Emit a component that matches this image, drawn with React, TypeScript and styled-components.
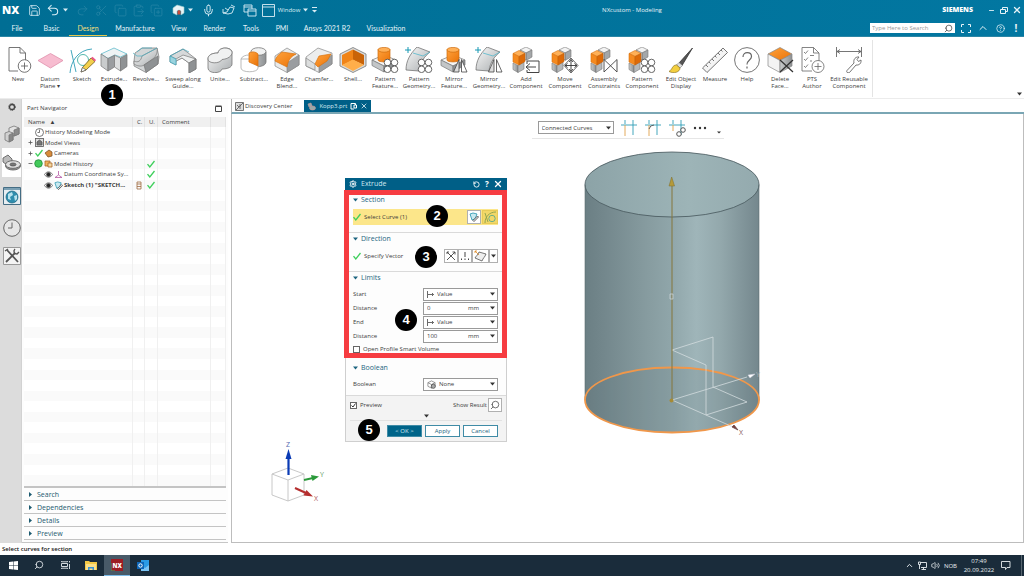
import React from 'react';
import styled, { createGlobalStyle, css } from 'styled-components';
import { Save, Undo2, Redo2, Scissors, Copy, ClipboardPaste, CopyPlus, Mic, Search, Settings, RotateCcw, X, ChevronUp, CircleHelp, Minus, Volume2 } from 'lucide-react';

const teal = '#00719a';
const deep = '#005f87';
const ink = '#3c3c3c';

const Global = createGlobalStyle`
  *, *::before, *::after { box-sizing: border-box; }
  body { margin: 0; font-family: "Open Sans", "Noto Sans", sans-serif; font-size: 6px; line-height: 8px; color: ${ink}; background: #fff; }
  button, input, select { font: inherit; color: inherit; margin: 0; padding: 0; border: 0; background: none; border-radius: 0; }
  svg { display: block; flex: none; }
  h1, h2, p { margin: 0; font: inherit; }
`;

const Page = styled.div`
  position: relative;
  display: flex;
  flex-direction: column;
  min-height: 100vh;
`;

/* ---------- header ---------- */
const Header = styled.header`
  background: linear-gradient(90deg, #006e94, #0277a1);
  color: #e6f3f8;
  border-bottom: 1px solid #2b86a5;
`;
const TitleBar = styled.div`
  position: relative;
  display: flex;
  align-items: center;
  height: 20px;
`;
const Brand = styled.strong`
  width: 26px;
  padding-left: 2px;
  font: 800 11px/20px "Open Sans", sans-serif;
  color: #fff;
`;
const QuickButton = styled.button<{ $w: number; $dim?: boolean }>`
  display: flex;
  align-items: center;
  justify-content: center;
  gap: 3px;
  width: ${(p) => p.$w}px;
  height: 18px;
  color: #d9edf5;
  opacity: ${(p) => (p.$dim ? 0.16 : 1)};
`;
const DocTitle = styled.h1`
  position: absolute;
  left: 50%;
  width: 240px;
  text-align: center;
`;
const WindowControls = styled.div`
  display: flex;
  align-items: center;
  gap: 3px;
  margin-left: auto;
  padding-right: 2px;
`;
const Maker = styled.strong`
  margin-right: 10px;
  font: 800 7px/10px "Open Sans", sans-serif;
  color: #fff;
`;
const MenuRow = styled.nav`
  display: flex;
  align-items: center;
  height: 16px;
`;
const MenuTab = styled.button<{ $w: number; $on?: boolean }>`
  width: ${(p) => p.$w}px;
  height: 16px;
  font-family: Lato, "Open Sans", sans-serif;
  font-size: 7px;
  line-height: 16px;
  border-bottom: 1px solid transparent;
  ${(p) => p.$on && css`color: #f3df7c; border-color: #e5c84c;`}
`;
const MenuTools = styled.div`
  display: flex;
  align-items: center;
  gap: 6px;
  margin-left: auto;
  padding-right: 3px;
`;
const SearchBox = styled.div`
  display: flex;
  align-items: center;
  width: 85px;
  height: 10px;
  padding: 0 2px;
  background: #fff;
  color: #444;
  input { flex: 1; min-width: 0; height: 10px; outline: none; }
  input::placeholder { color: #999; opacity: 1; }
`;
const PlainButton = styled.button`
  display: flex;
  align-items: center;
  justify-content: center;
  min-width: 10px;
  height: 10px;
`;
const Alert = styled.b`
  font-size: 10px;
  line-height: 10px;
`;

/* ---------- ribbon ---------- */
const Ribbon = styled.div`
  display: flex;
  height: 62px;
  padding: 3px 0 1px 2px;
  border-bottom: 1px solid #ececec;
`;
const ToolButton = styled.button<{ $w: number }>`
  display: flex;
  flex-direction: column;
  align-items: center;
  width: ${(p) => p.$w}px;
  padding-top: 7px;
  line-height: 7px;
  white-space: nowrap;
  span { margin-top: 3px; white-space: pre-line; }
`;
const RibbonEnd = styled.div`
  flex: 1;
  display: flex;
  align-items: flex-end;
  justify-content: flex-end;
  margin-left: 2px;
  padding: 0 2px 1px 0;
  border-left: 1px solid #e4e4e4;
`;

/* ---------- work area ---------- */
const Main = styled.main`
  flex: 1;
  display: flex;
  min-height: 0;
`;
const Rail = styled.div`
  width: 22px;
  padding-left: 2px;
  background: #dcdcdc;
  border-right: 1px solid #d2d2d2;
  > :first-child { margin-bottom: 5px; }
`;
const RailButton = styled.button<{ $h: number; $on?: boolean }>`
  display: flex;
  align-items: center;
  justify-content: center;
  width: 100%;
  height: ${(p) => p.$h}px;
  background: ${(p) => (p.$on ? '#fff' : 'none')};
`;
const Navigator = styled.section`
  display: flex;
  flex-direction: column;
  width: 206px;
  padding: 0 2px 2px 2px;
  border-bottom: 1px solid #c6c6c6;
  background: #fdfdfd;
`;
const NavHead = styled.div`
  display: flex;
  align-items: center;
  justify-content: space-between;
  height: 18px;
  padding: 0 3px;
`;
const TreeWrap = styled.div`
  flex: 1;
  display: flex;
  border-bottom: 2px solid #c4c4c4;
`;
const Tree = styled.table`
  width: 100%;
  table-layout: fixed;
  border-collapse: collapse;
  th, td { height: 10px; padding: 0; border-right: 1px solid #f0f0f0; line-height: 8px; overflow: hidden; white-space: nowrap; }
  th { font-weight: 400; text-align: left; padding-left: 4px; background: #f0f0f0; border-color: #e2e2e2; }
  tbody tr:nth-child(odd) { background: #fff; }
  tbody tr:nth-child(even) { background: #fafafa; }
`;
const NodeCell = styled.div<{ $depth: number; $bold?: boolean }>`
  display: flex;
  align-items: center;
  gap: 1px;
  height: 8px;
  padding-left: ${(p) => p.$depth}px;
  font-weight: ${(p) => (p.$bold ? 700 : 400)};
`;
const Center = styled.div`
  display: flex;
  align-items: center;
  justify-content: center;
  height: 8px;
`;
const Fold = styled.button`
  display: flex;
  align-items: center;
  gap: 5px;
  height: 13px;
  padding: 1px 5px 0;
  font-size: 7px;
  color: #1c5a70;
  border-bottom: 1px solid #c4c4c4;
`;

const Work = styled.section`
  flex: 1;
  display: flex;
  flex-direction: column;
  margin-left: 3px;
  min-width: 0;
`;
const FileTabs = styled.div`
  display: flex;
  height: 15px;
  padding-top: 1px;
  border-left: 1px solid #b5b5b5;
  border-bottom: 2px solid #7aa6b4;
`;
const FileTab = styled.button<{ $on?: boolean }>`
  display: flex;
  align-items: center;
  gap: ${(p) => (p.$on ? 3 : 1)}px;
  padding: 0 ${(p) => (p.$on ? 3 : 12)}px 0 3px;
  ${(p) => p.$on && css`background: ${deep}; color: #d9ecf3;`}
`;
const Canvas = styled.div`
  position: relative;
  flex: 1;
  background: #fff;
  border: solid #bdbdbd;
  border-width: 0 1px 1px 1px;
`;
const SelectionBar = styled.div`
  display: flex;
  align-items: center;
  gap: 7px;
  width: 192px;
  height: 25px;
  margin: 0 auto;
  padding: 3px 0 0 6px;
  border-bottom: 1px solid #e6e6e6;
`;
const Model = styled.svg`
  position: absolute;
  left: 347px;
  top: 32px;
`;
const Triad = styled.svg`
  position: absolute;
  left: 36px;
  bottom: 35px;
`;

/* ---------- dialog ---------- */
const Dialog = styled.form`
  position: absolute;
  left: 113px;
  top: 64px;
  width: 162px;
  background: #fdfdfd;
  border: solid #cfcfcf;
  border-width: 0 1px 1px 1px;
`;
const DialogTitle = styled.div`
  display: flex;
  align-items: center;
  gap: 4px;
  height: 12px;
  margin: 0 -1px;
  padding: 0 4px;
  background: ${deep};
  color: #cfe6ef;
  h2 { flex: 1; font-size: 7px; }
  b { font-size: 8px; color: #fff; }
`;
const Group = styled.section<{ $top?: number; $bottom: number }>`
  padding: ${(p) => p.$top ?? 0}px 8px ${(p) => p.$bottom}px 7px;
  border-bottom: 1px solid #dadada;
`;
const GroupHead = styled.button`
  display: flex;
  align-items: center;
  gap: 3px;
  height: 12px;
  margin-bottom: 3px;
  font-size: 7px;
  color: #1c6580;
`;
const Line = styled.div<{ $h: number; $hot?: boolean }>`
  display: flex;
  align-items: center;
  height: ${(p) => p.$h}px;
  gap: 3px;
  ${(p) => p.$hot && css`background: #fce68a;`}
  > label, > p { flex: 1; }
`;
const Strip = styled.div<{ $gap?: number }>`
  display: flex;
  gap: ${(p) => p.$gap ?? 0}px;
`;
const Box = styled.div<{ $w: number }>`
  display: flex;
  align-items: center;
  gap: 3px;
  width: ${(p) => p.$w}px;
  height: 13px;
  padding: 0 2px 0 3px;
  background: #fff;
  border: 1px solid #9a9a9a;
  input, select { flex: 1; min-width: 0; width: 10px; height: 11px; appearance: none; outline: none; }
  input + span { margin-right: 8px; }
`;
const Tool = styled.button<{ $w?: number; $hot?: boolean }>`
  display: flex;
  align-items: center;
  justify-content: center;
  width: ${(p) => p.$w ?? 14}px;
  height: 14px;
  background: ${(p) => (p.$hot ? '#f2d768' : '#fff')};
  border: 1px solid ${(p) => (p.$hot ? '#e8cb58' : '#b0b0b0')};
`;
const Tick = styled.input`
  appearance: none;
  width: 7px;
  height: 7px;
  border: 1px solid #666;
  background: #fff;
`;
const TickBox = styled.span`
  position: relative;
  display: flex;
  svg { position: absolute; left: 1px; top: 1px; pointer-events: none; }
`;
const Footer = styled.div`
  padding: 2px 4px 4px 4px;
  background: #f3f3f3;
`;
const ShowResult = styled.div`
  display: flex;
  align-items: center;
  gap: 1px;
`;
const More = styled.button`
  display: flex;
  justify-content: center;
  align-items: center;
  width: 100%;
  height: 9px;
  margin-bottom: 4px;
  border-bottom: 1px solid #e2e2e2;
`;
const Actions = styled.div`
  display: flex;
  justify-content: flex-end;
  gap: 3px;
  padding-right: 4px;
`;
const Action = styled.button<{ $main?: boolean }>`
  width: 35px;
  height: 12px;
  border: 1px solid #3f8ba6;
  background: ${(p) => (p.$main ? '#006489' : '#fff')};
  color: ${(p) => (p.$main ? '#d7ecf4' : '#1c6580')};
`;
const Frame = styled.div`
  position: absolute;
  left: -2px;
  right: -1px;
  top: 12px;
  height: 168px;
  border: 5px solid #f63c41;
  pointer-events: none;
`;
const Badge = styled.span<{ $x: number; $y: number }>`
  position: absolute;
  left: ${(p) => p.$x}px;
  top: ${(p) => p.$y}px;
  width: 22px;
  height: 22px;
  border-radius: 50%;
  background: #000;
  color: #fff;
  text-align: center;
  font: 700 13px/22px "Liberation Sans", Arial, sans-serif;
  z-index: 2;
`;

/* ---------- bottom ---------- */
const Status = styled.div`
  height: 12px;
  padding-left: 2px;
  line-height: 12px;
  font-weight: 600;
  color: #111;
`;
const Taskbar = styled.footer`
  display: flex;
  align-items: center;
  height: 21px;
  background: #1a2c3b;
  color: #e8edf0;
`;
const TaskButton = styled.button<{ $on?: boolean }>`
  display: flex;
  align-items: center;
  justify-content: center;
  width: 26px;
  height: 21px;
  border-bottom: 1px solid ${(p) => (p.$on ? '#7cbbe8' : 'transparent')};
  background: ${(p) => (p.$on ? '#485a68' : 'none')};
`;
const Tray = styled.div`
  display: flex;
  align-items: center;
  gap: 4px;
  margin-left: auto;
  height: 100%;
  padding-right: 2px;
  time { width: 36px; text-align: center; line-height: 9px; }
`;
const Peek = styled.i`
  height: 100%;
  margin-left: 6px;
  border-left: 1px solid #57656f;
`;

/* ---------- small glyphs ---------- */
const Caret = ({ c = '#333' }: { c?: string }) => (
  <svg width="5" height="4" viewBox="0 0 5 4" fill={c}><path d="M0 .5h5L2.5 3.5z" /></svg>
);
const Check = ({ s = 8 }: { s?: number }) => (
  <svg width={s} height={s} viewBox="0 0 8 8" fill="none" stroke="#3fcf5c" strokeWidth="1.3"><path d="M.5 4.2 2.8 7 7.5 1" /></svg>
);

/* ---------- ribbon drawings ---------- */
const g = '#666';
const HiddenSvg = styled.svg`
  position: absolute;
`;
const Defs = () => (
  <HiddenSvg width="0" height="0" aria-hidden>
    <defs>
      <linearGradient id="gr" x1="0" y1="0" x2="1" y2="1"><stop offset="0" stopColor="#fafafa" /><stop offset="1" stopColor="#a9adaf" /></linearGradient>
      <linearGradient id="dk" x1="0" y1="0" x2="1" y2="0"><stop offset="0" stopColor="#c9cccd" /><stop offset="1" stopColor="#8d9092" /></linearGradient>
      <linearGradient id="or" x1="0" y1="0" x2="1" y2="1"><stop offset="0" stopColor="#ffa23c" /><stop offset="1" stopColor="#ea7308" /></linearGradient>
    </defs>
  </HiddenSvg>
);
const Blocks = () => (
  <g strokeWidth=".6" stroke="#777">
    <path d="M1 16 6 18.500V25.500L1 22.500z" fill="url(#dk)" />
    <path d="M6 18.500 12 15V22L6 25.500z" fill="#b5b8ba" />
    <path d="M8 3 14 0 20 3 14 6z" fill="#f3f3f3" />
    <path d="M14 6 20 3V10L14 13.500z" fill="#a4a7a9" />
    <path d="M8 3 14 6V13L8 10z" fill="#d5d7d8" />
    <path d="M1 6.500 7 3.500 13 6.500 7 9.500z" fill="#ffb057" stroke="#d9720f" />
    <path d="M1 6.500 7 9.500V18L1 15z" fill="#f58a1f" stroke="#d9720f" />
    <path d="M7 9.500 13 6.500V14.500L7 18z" fill="#dd6a08" stroke="#c5620a" />
  </g>
);
const Rings = ({ x = 13, y = 12 }: { x?: number; y?: number }) => (
  <g fill="#fff" stroke="#444" strokeWidth=".8">
    <circle cx={x + 3.500} cy={y + 3.500} r="3.300" /><circle cx={x + 10.500} cy={y + 3.500} r="3.300" /><circle cx={x + 3.500} cy={y + 10.300} r="3.300" /><circle cx={x + 10.500} cy={y + 10.300} r="3.300" />
  </g>
);
const Mirror = () => (
  <g fill="#fff" stroke="#444" strokeWidth=".8"><path d="M19 12.500V25H13.500z" fill="#ddd" /><path d="M21.500 12.500V25H27z" /></g>
);
const Boss = () => (
  <g stroke="#777" strokeWidth=".7">
    <path d="M1 13 13 8 25 13 13 19z" fill="#f6f6f6" /><path d="M1 13 13 19V25L1 18.500z" fill="#c3c6c8" /><path d="M13 19 25 13V18L13 25z" fill="#8f9294" />
    <path d="M7 2.500V13C7 15.500 19 15.500 19 13V2.500z" fill="url(#or)" stroke="#cf6a0a" /><ellipse cx="13" cy="2.800" rx="6" ry="2.400" fill="#ffb057" stroke="#cf6a0a" />
  </g>
);
const Sheet = () => (
  <g><path d="M1 23C1 14 5 7 12 0L25 5C20 9 15 15 14 24z" fill="url(#gr)" stroke={g} strokeWidth=".7" /><path d="M8 6 18 9 25 5" fill="none" stroke="#56b8cb" strokeWidth=".8" /><path d="M3 0V6M0 3H6" stroke="#1798b4" /></g>
);
const Cube = ({ top }: { top: string }) => (
  <g stroke="#888" strokeWidth=".7"><path d="M2 7 14 .500 26 7 14 13.500z" fill={top} /><path d="M2 7 14 13.500V25.500L2 19z" fill="#f3f3f3" /><path d="M14 13.500 26 7V19L14 25.500z" fill="url(#dk)" /></g>
);

const drawings: Record<string, React.ReactNode> = {
  new: <g fill="#fff" stroke={g} strokeWidth=".9"><path d="M14 24H5V.500H16L21.500 6V20M16 .500V6H21.500" /><circle cx="20.500" cy="19" r="6.300" /><path d="M20.500 15.500V22.500M17 19H24" /></g>,
  datum: <path d="M2 13.500 14.500 6.500 27 13.500 14.500 21z" fill="#f7bcd0" stroke="#df8fab" strokeWidth=".8" />,
  sketch: <g fill="none" stroke="#2f9db5" strokeWidth=".9"><path d="M2 26C3 14 10 3 24 2M3 3 8 25" /><circle cx="15" cy="13" r="5.500" stroke="#3fb0a4" /><path d="M13 25 14.500 20.500 23 11 27 14.500 18 23z" fill="#f3cf4c" stroke="#735d20" strokeWidth=".8" /><path d="M13 25 14.500 20.500 18 23z" fill="#fff" stroke="#555" strokeWidth=".7" /><path d="M23 11 27 14.500 28 13 24.500 9.800z" fill="#e58" stroke="none" /></g>,
  extrude: <g stroke="#777" strokeWidth=".7"><path d="M1 7 14 1 27 7 20.500 10 15 8 8 11.500z" fill="#eef3f4" stroke="#4cb3c6" /><path d="M1 7 8 11.500V24L1 19z" fill="#c9cccd" /><path d="M8 11.500 14.500 8.300V20L8 24z" fill="#9a9da0" /><path d="M14.500 8.300 20.500 11V24L14.500 20z" fill="#dcdedf" /><path d="M20.500 11 27 7.500V19.500L20.500 24z" fill="#8f9294" /></g>,
  revolve: <g stroke="#777" strokeWidth=".7"><path d="M3 6 10 1 25 1 27 10 26 17 14 25.500 2 19V14z" fill="#d3d6d7" /><path d="M2 14C6 16 9 14 10 9L25 1C26 5 24 9 22 11L12 18C9 20 5 19 2 17z" fill="url(#gr)" /><path d="M12 18 26 9V17L14 25.500z" fill="#8f9294" /><path d="M1 6 5 9 10 9 25 1M5 5 10 1H20" fill="none" stroke="#4cb3c6" /></g>,
  sweep: <g stroke="#777" strokeWidth=".7"><path d="M1 9 14 2 27 12V22L20 26V16L13 11 7 14V18L1 15z" fill="#d6d9da" /><path d="M1 9 7 12 14 8 27 12 20 16 13 11 7 14" fill="#eef0f0" /><path d="M20 16 27 12V22L20 26z" fill="#8f9294" /><path d="M1 9 7 12V18L1 15z" fill="#9bd3de" stroke="#3ba4ba" /><path d="M1 9 14 2 20 5" fill="none" stroke="#3ba4ba" /></g>,
  unite: <g stroke="#777" strokeWidth=".8"><path d="M2 12V21C2 27 15 27 16 22C22 22 26 20 26 17V5C26 0 13-1 12 6C6 6 2 8 2 12z" fill="url(#gr)" /><path d="M2 12C2 17 14 17 16 12.500C22 12 26 9 26 5.500C26 0 13-1 12 6C6 6 2 8 2 12z" fill="#f0f1f1" /></g>,
  subtract: <g stroke="#777" strokeWidth=".8"><path d="M11 5V18C14 21 26 20 26 15V5z" fill="url(#dk)" /><ellipse cx="18.500" cy="4.500" rx="7.500" ry="3.800" fill="#f0f1f1" /><path d="M1 12V21C1 26 18 26 18 21V12z" fill="#fff" stroke="#aaa" /><path d="M9 6C12 4 16 5 18 7V19L9 15z" fill="url(#or)" stroke="#d9720f" /><path d="M1 12C2 9 6 8 9 8" fill="none" stroke="#aaa" /></g>,
  blend: <g stroke="#888" strokeWidth=".7"><path d="M2 9 14 1 26 8V18L14 25.500 2 19z" fill="#e9eaea" /><path d="M14 16 26 8V18L14 25.500z" fill="#9a9da0" /><path d="M2 14C3 10 6 7 9 5L23 7C17 10 15 14 14 20z" fill="url(#or)" stroke="#d9720f" /></g>,
  chamfer: <g stroke="#888" strokeWidth=".7"><path d="M1 10 13 1 27 6V17L14 25.500 1 19z" fill="#eceded" /><path d="M14 17 27 8V17L14 25.500z" fill="#9a9da0" /><path d="M1 11 10 17V23L1 19z" fill="#dcdede" /><path d="M10 17 14 9 26 7 22 14 13 20z" fill="url(#or)" stroke="#d9720f" /></g>,
  shell: <g stroke="#777" strokeWidth=".8"><path d="M14 .500 27 7V19L14 25.500 1 19V7z" fill="#d9dbdc" /><path d="M3 8 14 2.500V13L3 18.500z" fill="#f08418" stroke="none" /><path d="M14 2.500 25 8V18L14 13z" fill="#c96308" stroke="none" /><path d="M3 18 14 12.500 25 18 14 24z" fill="#ffae4a" stroke="none" /></g>,
  patternFeature: <><Boss /><Rings /></>,
  patternGeometry: <><Sheet /><Rings /></>,
  mirrorFeature: <><Boss /><Mirror /></>,
  mirrorGeometry: <><Sheet /><Mirror /></>,
  add: <><Blocks /><path d="M15 17V14H27V25.500H15V23M24 20H14M18 16.500 14 20 18 23.500" fill="none" stroke="#444" /></>,
  move: <><Blocks /><path d="M20 11 27 18.500 20 26 13 18.500z" fill="#fff" stroke="#444" strokeWidth=".8" /><path d="M20 12.500V24.500M14 18.500H26M18 15 20 12.500 22 15M18 22 20 24.500 22 22M16.500 16.500 14 18.500 16.500 20.500M23.500 16.500 26 18.500 23.500 20.500" fill="none" stroke="#333" strokeWidth=".9" /></>,
  constraints: <><Blocks /><path d="M14 12.500 27 25V12.500L14 25z" fill="#fff" stroke="#444" strokeWidth=".9" /></>,
  patternComponent: <><Blocks /><Rings /></>,
  display: <g><path d="M25.500 1 12 16 15 18.500z" fill="#555" stroke="#333" strokeWidth=".8" /><path d="M12 15.500 9.500 18 13 21 15.500 18.500z" fill="#ddd" stroke="#777" strokeWidth=".6" /><path d="M9.500 18C5 18 6 22 2 24.500C7 27 13 25 13 21z" fill="#f3cf3f" stroke="#8f7620" strokeWidth=".7" /></g>,
  measure: <g fill="#f4f4f4" stroke={g} strokeWidth=".9"><path d="M1.500 21 22 1 26.500 5.500 6 25.500z" /><path d="M5 18 7 20M8 15 9.500 16.500M11 12 13 14M14 9 15.500 10.500M17 6 19 8M20 3 21.500 4.500" /></g>,
  help: <g fill="none" stroke={g} strokeWidth=".9"><circle cx="14" cy="13" r="12.400" /><path d="M10 10C10 4 18.500 4.500 18.500 9.500C18.500 13 14 13 14 17.500M14 19.500V21.500" strokeWidth="1.200" /></g>,
  deleteFace: <g><Cube top="url(#or)" /><path d="M14 13 27 25M27 13 14 25" stroke="#333" strokeWidth="1.300" /></g>,
  pts: <g fill="#fff" stroke={g} strokeWidth=".8"><path d="M14 24H4V.500H15.500L21 6V15M15.500 .500V6H21" /><path d="M6 5 7.500 6.500 10 3.500M6 12 7.500 13.500 10 10.500M6 19 7.500 20.500 10 17.500M12 8.500H16M12 14H14" /><circle cx="20" cy="19.500" r="6" /><path d="M20 16V23M16.500 19.500H23.500" /></g>,
  reusable: <g fill="#fff" stroke={g} strokeWidth=".9"><path d="M1.500 0V10M26.500 0V10M2 4.500H26M5 2.500 2 4.500 5 6.500M23 2.500 26 4.500 23 6.500" /><path d="M12 23.500 19 16C18 12 21 9.500 24 10L22 12.500 23.500 14.500 26 13C26.500 16.500 24 18.500 21 18L14.500 25.500C12.500 26.500 11 25 12 23.500z" /></g>,
};

const tools: [string, string, number][] = [
  ['new', 'New', 32], ['datum', 'Datum\nPlane ▾', 32], ['sketch', 'Sketch', 32], ['extrude', 'Extrude...', 32],
  ['revolve', 'Revolve...', 32], ['sweep', 'Sweep along\nGuide...', 42], ['unite', 'Unite...', 32], ['subtract', 'Subtract...', 36],
  ['blend', 'Edge\nBlend...', 30], ['chamfer', 'Chamfer...', 34], ['shell', 'Shell...', 34], ['patternFeature', 'Pattern\nFeature...', 30],
  ['patternGeometry', 'Pattern\nGeometry...', 38], ['mirrorFeature', 'Mirror\nFeature...', 32], ['mirrorGeometry', 'Mirror\nGeometry...', 38],
  ['add', 'Add\nComponent', 36], ['move', 'Move\nComponent', 42], ['constraints', 'Assembly\nConstraints', 36],
  ['patternComponent', 'Pattern\nComponent', 40], ['display', 'Edit Object\nDisplay', 38], ['measure', 'Measure', 30],
  ['help', 'Help', 34], ['deleteFace', 'Delete\nFace...', 32], ['pts', 'PTS\nAuthor', 32], ['reusable', 'Edit Reusable\nComponent', 42],
];
const menu: [string, number][] = [
  ['File', 34], ['Basic', 35], ['Design', 38], ['Manufacture', 56], ['View', 32], ['Render', 39], ['Tools', 34], ['PMI', 28], ['Ansys 2021 R2', 62], ['Visualization', 56],
];

/* ---------- tree drawings ---------- */
const Small = ({ children, w = 9 }: { children: React.ReactNode; w?: number }) => (
  <svg width={w} height="9" viewBox={`0 0 ${w} 9`} fill="none" stroke="#555" strokeWidth=".8">{children}</svg>
);
const Plus = () => <Small w={6}><path d="M.500 4.500H4.500M2.500 2.500V6.500" /></Small>;
const Eye = () => <Small><path d="M.500 4.500C2.500 1 6.500 1 8.500 4.500C6.500 8 2.500 8 .500 4.500z" /><circle cx="4.500" cy="4.500" r="2" fill="#222" /></Small>;
const SketchMini = ({ s = 10 }: { s?: number }) => (
  <svg width={s} height={s} viewBox="0 0 10 10" fill="none" stroke="#2293ad"><path d="M1 2 4 1 8 2 6 7 3 8z" fill="#c9e9f0" strokeWidth=".8" /><path d="M4 8.500 8.500 4 9.500 5 5 9.500z" fill="#fff" stroke="#333" strokeWidth=".8" /></svg>
);
const CubeMini = ({ s = 10 }: { s?: number }) => (
  <svg width={s} height={s} viewBox="0 0 10 10" fill="#fff" stroke="#777" strokeWidth=".8"><path d="M1 3 5 1 9 3V7L5 9 1 7zM1 3 5 5 9 3M5 5V9" /><circle cx="7" cy="7" r="2.300" fill="#aaa" stroke="#444" /></svg>
);

const treeRows: { depth: number; bold?: boolean; node: React.ReactNode; c?: boolean; u?: boolean }[] = [
  { depth: 11, node: <><Small><circle cx="4.500" cy="4.500" r="4" /><path d="M4.500 1.500V4.500H2.500" /></Small>History Modeling Mode</> },
  { depth: 4, node: <><Plus /><Small><rect x=".500" y=".500" width="8" height="8" fill="#ddd" /><path d="M2 7V4L4.500 2 7 4V7z" fill="#777" /></Small>Model Views</> },
  { depth: 4, node: <><Plus /><Check s={8} /><Small><path d="M1 4 5 1 8 3V7L4 8z" fill="#d98b3a" stroke="#7d5428" /></Small>Cameras</> },
  { depth: 4, u: true, node: <><Small w={5}><path d="M.500 4.500H4.500" /></Small><Small><circle cx="4.500" cy="4.500" r="3.800" fill="#43c95a" stroke="#1f8f38" /></Small><Small><path d="M1 2H6V7H1z" fill="#f1b15a" stroke="#a8672a" /><path d="M4 4H8V8H4z" fill="#f3d7a0" stroke="#a8672a" /></Small>Model History</> },
  { depth: 20, u: true, node: <><Eye /><Small><path d="M4.500 5V1M4.500 5 1 7.500M4.500 5 8 7.500M1 7.500H8" stroke="#b55aa5" /></Small>Datum Coordinate Sy...</> },
  { depth: 20, bold: true, c: true, u: true, node: <><Eye /><SketchMini s={9} />Sketch (1) "SKETCH...</> },
];

function PartNavigator() {
  return (
    <Navigator>
      <NavHead>
        <h2>Part Navigator</h2>
        <PlainButton aria-label="Restore panel"><svg width="7" height="7" viewBox="0 0 7 7" fill="none" stroke="#444"><path d="M.500 1.500H6.500V6.500H.500zM.500 1H6.500" /></svg></PlainButton>
      </NavHead>
      <TreeWrap>
        <Tree>
          <colgroup><col /><col width="12" /><col width="13" /><col width="53" /><col width="15" /></colgroup>
          <thead>
            <tr><th>Name &nbsp; ▲</th><th>C.</th><th>U.</th><th>Comment</th><th aria-label="Spare" /></tr>
          </thead>
          <tbody>
            {Array.from({ length: 34 }, (_, i) => {
              const r = treeRows[i];
              return (
                <tr key={i}>
                  <td>{r && <NodeCell $depth={r.depth} $bold={r.bold}>{r.node}</NodeCell>}</td>
                  <td>{r?.c && <Center><Small w={6}><path d="M1 1H5V8H1zM1 3H5M1 5.500H5" stroke="#a06a40" /></Small></Center>}</td>
                  <td>{r?.u && <Center><Check /></Center>}</td>
                  <td /><td />
                </tr>
              );
            })}
          </tbody>
        </Tree>
      </TreeWrap>
      {['Search', 'Dependencies', 'Details', 'Preview'].map((t) => (
        <Fold key={t}><svg width="3" height="5" viewBox="0 0 3 5" fill="#1c5a70"><path d="M0 0 3 2.500 0 5z" /></svg>{t}</Fold>
      ))}
    </Navigator>
  );
}

const ValueSelect = ({ id, value, icon }: { id: string; value: string; icon: React.ReactNode }) => (
  <Box $w={75}>{icon}<select id={id} defaultValue={value}><option>{value}</option></select><Caret /></Box>
);
const Span = () => <svg width="7" height="9" viewBox="0 0 7 9" fill="none" stroke="#444" strokeWidth=".8"><path d="M.500 1V8M1 4.500H6.500M5 3 6.500 4.500 5 6" /></svg>;
const Head = ({ children }: { children: string }) => <GroupHead type="button"><Caret c="#1c6580" />{children}</GroupHead>;

function ExtrudeDialog() {
  return (
    <Dialog onSubmit={(e) => e.preventDefault()}>
      <DialogTitle>
        <Settings size={8} color="#fff" strokeWidth={3} />
        <h2>Extrude</h2>
        <Strip $gap={1}>
          <PlainButton type="button" aria-label="Reset"><RotateCcw size={7} color="#fff" strokeWidth={3} /></PlainButton>
          <PlainButton type="button" aria-label="Help"><b>?</b></PlainButton>
          <PlainButton type="button" aria-label="Close"><X size={10} color="#fff" strokeWidth={3} /></PlainButton>
        </Strip>
      </DialogTitle>
      <Group $top={4} $bottom={7}>
        <Head>Section</Head>
        <Line $h={16} $hot>
          <Check /><p>Select Curve (1)</p>
          <Strip $gap={1}>
            <Tool type="button" aria-label="Sketch section"><SketchMini /></Tool>
            <Tool type="button" $w={16} $hot aria-label="Curve"><svg width="13" height="12" viewBox="0 0 13 12" fill="none" stroke="#5aa98c" strokeWidth=".9"><path d="M1 12C1 6 5 1 12 1M1 2 4 11" stroke="#8aa04c" /><circle cx="8" cy="7.500" r="3.200" /></svg></Tool>
          </Strip>
        </Line>
      </Group>
      <Group $bottom={7}>
        <Head>Direction</Head>
        <Line $h={16}>
          <Check /><p>Specify Vector</p>
          <Strip>
            <Tool type="button" aria-label="Reverse direction"><svg width="10" height="10" viewBox="0 0 10 10" fill="none" stroke="#444" strokeWidth=".9"><path d="M1 1 9 9M9 1 1 9M6.500 1H9V3.500M1 3V1H3" /></svg></Tool>
            <Tool type="button" aria-label="Vector dialog"><svg width="10" height="10" viewBox="0 0 10 10" fill="#444"><path d="M4.500 1H5.500V6H4.500zM4.500 7.500H5.500V9H4.500zM1 7.500H2V9H1zM8 7.500H9V9H8z" /></svg></Tool>
            <Tool type="button" $w={17} aria-label="Face normal"><svg width="13" height="12" viewBox="0 0 13 12" fill="#eee" stroke="#555" strokeWidth=".8"><path d="M5 2 12 4C11 7 9 8 8 11L1 8C2 6 4 5 5 2z" /><path d="M1 1 5 5M1 1 3 1M1 1V3" stroke="#e0881f" /></svg></Tool>
            <Tool type="button" $w={9} aria-label="More vectors"><Caret /></Tool>
          </Strip>
        </Line>
      </Group>
      <Group $bottom={1}>
        <Head>Limits</Head>
        <Line $h={14}><label htmlFor="start">Start</label><ValueSelect id="start" value="Value" icon={<Span />} /></Line>
        <Line $h={14}><label htmlFor="d1">Distance</label><Box $w={75}><input id="d1" defaultValue="0" /><span>mm</span><Caret /></Box></Line>
        <Line $h={14}><label htmlFor="end">End</label><ValueSelect id="end" value="Value" icon={<Span />} /></Line>
        <Line $h={14}><label htmlFor="d2">Distance</label><Box $w={75}><input id="d2" defaultValue="100" /><span>mm</span><Caret /></Box></Line>
        <Line $h={12}><Tick id="smart" type="checkbox" /><label htmlFor="smart">Open Profile Smart Volume</label></Line>
      </Group>
      <Group $top={5} $bottom={4}>
        <Head>Boolean</Head>
        <Line $h={14}><label htmlFor="bool">Boolean</label><ValueSelect id="bool" value="None" icon={<CubeMini s={9} />} /></Line>
      </Group>
      <Footer>
        <Line $h={14}>
          <TickBox><Tick id="preview" type="checkbox" defaultChecked /><svg width="5" height="5" viewBox="0 0 5 5" fill="none" stroke="#333"><path d="M.500 2.500 2 4 4.500 .500" /></svg></TickBox>
          <label htmlFor="preview">Preview</label>
          <ShowResult>
            Show Result
            <Tool type="button" aria-label="Show result"><Search size={10} color="#555" strokeWidth={2} transform="scale(-1 1)" /></Tool>
          </ShowResult>
        </Line>
        <More type="button" aria-label="Show more"><Caret /></More>
        <Actions><Action $main>&lt; OK &gt;</Action><Action type="button">Apply</Action><Action type="button">Cancel</Action></Actions>
      </Footer>
      <Frame />
      <Badge $x={80} $y={27}>2</Badge>
      <Badge $x={69} $y={68}>3</Badge>
      <Badge $x={49} $y={131}>4</Badge>
      <Badge $x={12} $y={241}>5</Badge>
    </Dialog>
  );
}

const CylinderModel = () => (
  <Model width="190" height="295" viewBox="580 146 190 295" fill="none">
    <defs>
      <linearGradient id="body" x1="0" x2="1" y1="0" y2="0">
        <stop offset="0" stopColor="#6b7f84" /><stop offset=".12" stopColor="#74888d" /><stop offset=".35" stopColor="#869b9f" />
        <stop offset=".5" stopColor="#90a6aa" /><stop offset=".64" stopColor="#9fb5b9" /><stop offset=".78" stopColor="#93a8ac" /><stop offset="1" stopColor="#74878d" />
      </linearGradient>
      <linearGradient id="lid" x1="0" x2="1" y1="0" y2="0"><stop offset="0" stopColor="#8ca3a7" /><stop offset=".6" stopColor="#9db4b7" /><stop offset="1" stopColor="#94aaae" /></linearGradient>
    </defs>
    <path d="M586 184.500V400A87 32.500 0 0 0 760 400V184.500z" fill="url(#body)" />
    <ellipse cx="673" cy="400" rx="87" ry="32.500" fill="#5f7479" fillOpacity=".18" />
    <ellipse cx="673" cy="184.500" rx="87" ry="32.500" fill="url(#lid)" stroke="#45555a" strokeWidth=".8" />
    <path d="M586 184.500V400M760 184.500V400" stroke="#5c6c71" strokeWidth=".6" />
    <ellipse cx="673" cy="400" rx="87" ry="32.500" stroke="#f0974a" strokeWidth="1.800" />
    <path d="M673 350 714 337V387L748 402 707 415V365zM673 400 748 377M673 400 734 427" stroke="#d3dcde" strokeWidth=".8" />
    <path d="M749 375 756 374 751 378z" fill="#fff" stroke="#ccd" strokeWidth=".5" />
    <path d="M733 427 739 430 735 425z" fill="#7a3b3b" stroke="#6a4a4a" strokeWidth=".8" />
    <path d="M673 400V184" stroke="#85773a" strokeWidth="1" />
    <path d="M670 186 672.700 177 675.500 186z" fill="#b59a3a" stroke="#7d6d2c" strokeWidth=".5" />
    <circle cx="672.500" cy="400.500" r="2" fill="#a58a35" /><path d="M671 294H674V299H671z" stroke="#c9d3d5" strokeWidth=".8" />
    <text x="757" y="377" fontSize="7" fill="#aab3b6">Y</text><text x="740" y="435" fontSize="7" fill="#8a5a5a">X</text>
  </Model>
);
const AxisTriad = () => (
  <Triad width="62" height="68" viewBox="268 439 62 68" fill="none">
    <path d="M272 474 288 468 304 474 288 480zM272 474V495L288 501 304 495V474M288 480V501" fill="#fff" stroke="#c2c2c2" strokeWidth=".9" />
    <path d="M288.500 475V458" stroke="#0a3bb5" strokeWidth="2.200" /><path d="M285.500 459 288.500 449 291.500 459z" fill="#0a3bb5" />
    <path d="M304 480 313 478" stroke="#2a9a3a" strokeWidth="2" /><path d="M311 475 319 476.500 312.500 481z" fill="#2a9a3a" />
    <path d="M295 488 306 493" stroke="#b52f2f" strokeWidth="2.200" /><path d="M306.500 490 313 496.500 303.500 495.500z" fill="#b52f2f" />
    <text x="286" y="447" fontSize="7" fill="#5468b0">Z</text><text x="320" y="477" fontSize="7" fill="#5a9a62">Y</text><text x="314" y="501" fontSize="7" fill="#b05a5a">X</text>
  </Triad>
);

export default function App() {
  return (
    <Page>
      <Global />
      <Defs />
      <Header>
        <TitleBar>
          <Brand>NX</Brand>
          <QuickButton $w={16} aria-label="Save"><Save size={13} strokeWidth={1.5} /></QuickButton>
          <QuickButton $w={30} aria-label="Undo"><Undo2 size={14} strokeWidth={1.8} /><Caret c="#d9edf5" /></QuickButton>
          <QuickButton $w={20} $dim aria-label="Redo"><Redo2 size={13} strokeWidth={1.5} /></QuickButton>
          <QuickButton $w={19} $dim aria-label="Cut"><Scissors size={13} strokeWidth={1.5} /></QuickButton>
          <QuickButton $w={18} $dim aria-label="Copy"><Copy size={13} strokeWidth={1.5} /></QuickButton>
          <QuickButton $w={18} $dim aria-label="Paste"><ClipboardPaste size={13} strokeWidth={1.5} /></QuickButton>
          <QuickButton $w={19} $dim aria-label="Repeat"><CopyPlus size={13} strokeWidth={1.5} /></QuickButton>
          <QuickButton $w={32} aria-label="Orientation"><svg width="13" height="12" viewBox="0 0 13 12"><path d="M1 4 5 1 12 3V9L9 11V7L7 6 5 7V11L1 9z" fill="#e9f3f6" stroke="#9cc" strokeWidth=".6" /><path d="M5.500 7 7 6 8.500 7V10.500H5.500z" fill="#c74a3a" /></svg><Caret c="#d9edf5" /></QuickButton>
          <QuickButton $w={20} aria-label="Voice command"><Mic size={13} strokeWidth={1.8} /></QuickButton>
          <QuickButton $w={22} aria-label="Touch mode"><svg width="14" height="12" viewBox="0 0 14 12" fill="none" stroke="currentColor" strokeWidth=".9"><path d="M1 9 5 8 8 3 12 4 10 9 6 10zM1 9 1 5M3 4 6 6M9 1 13 3" /></svg></QuickButton>
          <QuickButton $w={20} aria-label="Switch window"><svg width="14" height="13" viewBox="0 0 14 13" fill={teal} stroke="currentColor" strokeWidth=".9"><path d="M1 1H9V8H1zM1 3H9" /><path d="M5 5H13V12H5zM5 7H13" /></svg></QuickButton>
          <QuickButton $w={50} aria-label="Window menu"><svg width="13" height="13" viewBox="0 0 13 13" fill="none" stroke="currentColor" strokeWidth=".9"><path d="M.500 .500H12.500V12.500H.500zM.500 3H12.500" /></svg>Window<Caret c="#d9edf5" /></QuickButton>
          <QuickButton $w={8} aria-label="Customize"><svg width="5" height="6" viewBox="0 0 5 6" fill="currentColor"><path d="M0 0H5V1H0zM0 3H5L2.500 5.500z" /></svg></QuickButton>
          <DocTitle>NXcustom - Modeling</DocTitle>
          <WindowControls>
            <Maker>SIEMENS</Maker>
            <PlainButton aria-label="Minimize"><Minus size={7} strokeWidth={3} /></PlainButton>
            <PlainButton aria-label="Restore"><svg width="8" height="7" viewBox="0 0 8 7" fill="none" stroke="currentColor"><path d="M2.500 2V.500H7.500V4.500H6M.500 2.500H5.500V6.500H.500z" /></svg></PlainButton>
            <PlainButton aria-label="Close"><X size={10} strokeWidth={3} /></PlainButton>
          </WindowControls>
        </TitleBar>
        <MenuRow>
          {menu.map(([t, w]) => <MenuTab key={t} $w={w} $on={t === 'Design'}>{t}</MenuTab>)}
          <MenuTools>
            <SearchBox><input aria-label="Search commands" placeholder="Type Here to Search" /><Search size={9} strokeWidth={2} transform="scale(-1 1)" /></SearchBox>
            <PlainButton aria-label="Full screen"><svg width="10" height="9" viewBox="0 0 10 9" fill="none" stroke="currentColor"><path d="M.500 3V.500H3M7 .500H9.500V3M9.500 6V8.500H7M3 8.500H.500V6" /></svg></PlainButton>
            <PlainButton aria-label="Collapse ribbon"><ChevronUp size={12} strokeWidth={2} /></PlainButton>
            <PlainButton aria-label="Help"><CircleHelp size={9} strokeWidth={2} /></PlainButton>
            <PlainButton aria-label="Alerts"><Alert>!</Alert></PlainButton>
          </MenuTools>
        </MenuRow>
      </Header>

      <Ribbon>
        {tools.map(([k, label, w]) => (
          <ToolButton key={k} $w={w}><svg width="28" height="26" viewBox="0 0 28 26">{drawings[k]}</svg><span>{label}</span></ToolButton>
        ))}
        <RibbonEnd><Caret /></RibbonEnd>
      </Ribbon>
      <Badge $x={101} $y={84}>1</Badge>

      <Main>
        <Rail>
          <RailButton $h={16} aria-label="Settings"><svg width="8" height="8" viewBox="0 0 8 8" fill="none" stroke="#444"><circle cx="4" cy="4" r="2.500" strokeWidth="1.300" /><circle cx="4" cy="4" r="3.400" strokeDasharray="1 1" /></svg></RailButton>
          <RailButton $h={28} aria-label="Assembly Navigator"><svg width="16" height="18" viewBox="0 0 16 18" stroke="#777" strokeWidth=".8"><path d="M5 3 10 1 15 3V9L10 11 5 9z" fill="#e3e3e3" /><path d="M10 5 15 3V9L10 11z" fill="#8b8b8b" /><path d="M1 8 5 6.500 9 8V15L5 17 1 15z" fill="#d0d0d0" /><path d="M5 10 9 8V15L5 17z" fill="#888" /></svg></RailButton>
          <RailButton $h={29} $on aria-label="Part Navigator"><svg width="19" height="18" viewBox="0 0 19 18" stroke="#555" strokeWidth=".8"><path d="M1 4 6 1 10 5V10L5 11 1 8z" fill="#bbb" /><ellipse cx="11" cy="12" rx="7.500" ry="4" fill="#999" /><ellipse cx="11" cy="10.500" rx="7.500" ry="3.800" fill="#e0e0e0" /><ellipse cx="11" cy="10.500" rx="3" ry="1.500" fill="#777" /></svg></RailButton>
          <RailButton $h={37} aria-label="Web browser"><svg width="18" height="18" viewBox="0 0 18 18"><path d="M.500 .500H17.500V17.500H.500z" fill="#e7eef2" stroke="#446d84" /><path d="M1 1H17V3H1z" fill="#7ba0b4" /><circle cx="9" cy="10" r="6" fill="#2f8dad" stroke="#1b6480" strokeWidth=".7" /><path d="M5 7 9 5 10 8 7 10 8 13 5 12zM11 9 14 8 14 12 12 14z" fill="#b9e3ee" /></svg></RailButton>
          <RailButton $h={28} aria-label="History"><svg width="18" height="18" viewBox="0 0 18 18" fill="#e6e6e6" stroke="#666"><circle cx="9" cy="9" r="8.300" /><path d="M9 3.500V9H5" fill="none" /></svg></RailButton>
          <RailButton $h={28} aria-label="Roles"><svg width="18" height="18" viewBox="0 0 18 18" fill="none" stroke="#555"><path d="M.500 .500H17.500V17.500H.500z" stroke="#999" fill="#f4f4f4" /><path d="M3 15 12 6M4 3 15 15" strokeWidth="1.800" /><path d="M12 2C10 4 11 7 14 7L16 5M2 4 5 2" strokeWidth="1.400" /></svg></RailButton>
        </Rail>
        <PartNavigator />
        <Work>
          <FileTabs>
            <FileTab><svg width="9" height="9" viewBox="0 0 9 9" fill="#ddd" stroke="#555" strokeWidth=".8"><path d="M.500 .500H8.500V8.500H.500zM1 8 8 1M2 3 4 5M5 2V7" /></svg>Discovery Center</FileTab>
            <FileTab $on><svg width="9" height="9" viewBox="0 0 9 9" fill="#9aa" stroke="#c99" strokeWidth=".6"><path d="M1 2 4 1 5 4 2 5z" /><ellipse cx="5.500" cy="6" rx="3" ry="2" /></svg>Kopp3.prt<svg width="7" height="8" viewBox="0 0 7 8" fill="none" stroke="#fff"><path d="M5.500 3V1.500H1V7H4M4 3H6.500V6H4z" /></svg><X size={8} strokeWidth={2.500} /></FileTab>
          </FileTabs>
          <Canvas>
            <SelectionBar>
              <Box $w={77}><select aria-label="Curve rule" defaultValue="Connected Curves"><option>Connected Curves</option></select><Caret /></Box>
              {[0, 1, 2].map((n) => (
                <PlainButton key={n} aria-label={['Stop at intersection', 'Follow fillet', 'Chain within feature'][n]}>
                  <svg width="17" height="18" viewBox="0 0 17 18" fill="none" strokeWidth=".9">
                    <path d="M4 1V5M12 1V16M0 6H16" stroke="#2f9db5" /><path d={n === 2 ? 'M4 6V12' : 'M4 6V17'} stroke="#e0a04a" />
                    {n === 1 && <path d="M4 10Q5 6 9 6" stroke="#555" />}
                    {n === 2 && <g stroke="#444" fill="#fff"><circle cx="10" cy="15" r="2.300" /><circle cx="14" cy="11" r="2.300" /></g>}
                  </svg>
                </PlainButton>
              ))}
              <PlainButton aria-label="More options"><svg width="14" height="4" viewBox="0 0 14 4" fill="#333"><circle cx="2" cy="2" r="1.200" /><circle cx="7" cy="2" r="1.200" /><circle cx="12" cy="2" r="1.200" /></svg></PlainButton>
              <PlainButton aria-label="Bar options"><svg width="10" height="14" viewBox="0 0 10 14" fill="#333"><path d="M3 10.500H7L5 12.500z" /></svg></PlainButton>
            </SelectionBar>
            <CylinderModel />
            <AxisTriad />
            <ExtrudeDialog />
          </Canvas>
        </Work>
      </Main>

      <Status>Select curves for section</Status>
      <Taskbar>
        <TaskButton aria-label="Start"><svg width="9" height="9" viewBox="0 0 9 9" fill="#fff"><path d="M0 1 4 .500V4.200H0zM4.500 .400 9 0V4.200H4.500zM0 4.700H4V8.500L0 8zM4.500 4.700H9V9L4.500 8.600z" /></svg></TaskButton>
        <TaskButton aria-label="Search"><Search size={10} strokeWidth={2} transform="scale(-1 1)" /></TaskButton>
        <TaskButton aria-label="Task view"><svg width="9" height="8" viewBox="0 0 9 8" fill="none" stroke="#e8edf0" strokeWidth=".9"><path d="M.500 2.500H6.500V5.500H.500zM.500 0V.800H6.500V0M.500 8V7.200H6.500V8M8.500 0V1.500M8.500 3V8" /></svg></TaskButton>
        <TaskButton aria-label="File Explorer"><svg width="12" height="10" viewBox="0 0 12 10"><path d="M0 1H4L5 2H12V10H0z" fill="#f5c945" /><path d="M1 4H11V10H1z" fill="#fbe08a" /><path d="M3 7H9V10H7.500V8.500H4.500V10H3z" fill="#3a93d6" /></svg></TaskButton>
        <TaskButton $on aria-label="NX"><svg width="12" height="12" viewBox="0 0 12 12"><path d="M0 0H12V12H0z" fill="#9d1c24" /><path d="M0 4V12H4" stroke="#3ba060" fill="none" /><text x="1.500" y="8.500" fontSize="6" fontWeight="800" fill="#fff">NX</text></svg></TaskButton>
        <TaskButton aria-label="Outlook"><svg width="12" height="11" viewBox="0 0 12 11"><path d="M4 0H12V10H4z" fill="#2a9be6" /><path d="M4 5 8 8 12 5V11H4z" fill="#7ac4f5" /><path d="M0 2H7V9H0z" fill="#0d66b8" /><circle cx="3.500" cy="5.500" r="1.700" fill="none" stroke="#fff" /></svg></TaskButton>
        <Tray>
          <ChevronUp size={9} strokeWidth={2.500} />
          <svg width="9" height="9" viewBox="0 0 9 9" fill="none" stroke="#e8edf0" strokeWidth=".9"><path d="M3 1.500H8.500V6.500H3M5.500 6.500V8.500M3.500 8.500H8M.500 1H2.500V3.500H.500zM1.500 3.500V8" /></svg>
          <Volume2 size={9} strokeWidth={2} />
          <span>NOB</span>
          <time>07:49 20.09.2022</time>
          <svg width="10" height="9" viewBox="0 0 10 9" fill="none" stroke="#e8edf0" strokeWidth=".9"><path d="M.500 .500H9V6.500H6L4.500 8.500V6.500H.500z" /></svg>
          <Peek />
        </Tray>
      </Taskbar>
    </Page>
  );
}
